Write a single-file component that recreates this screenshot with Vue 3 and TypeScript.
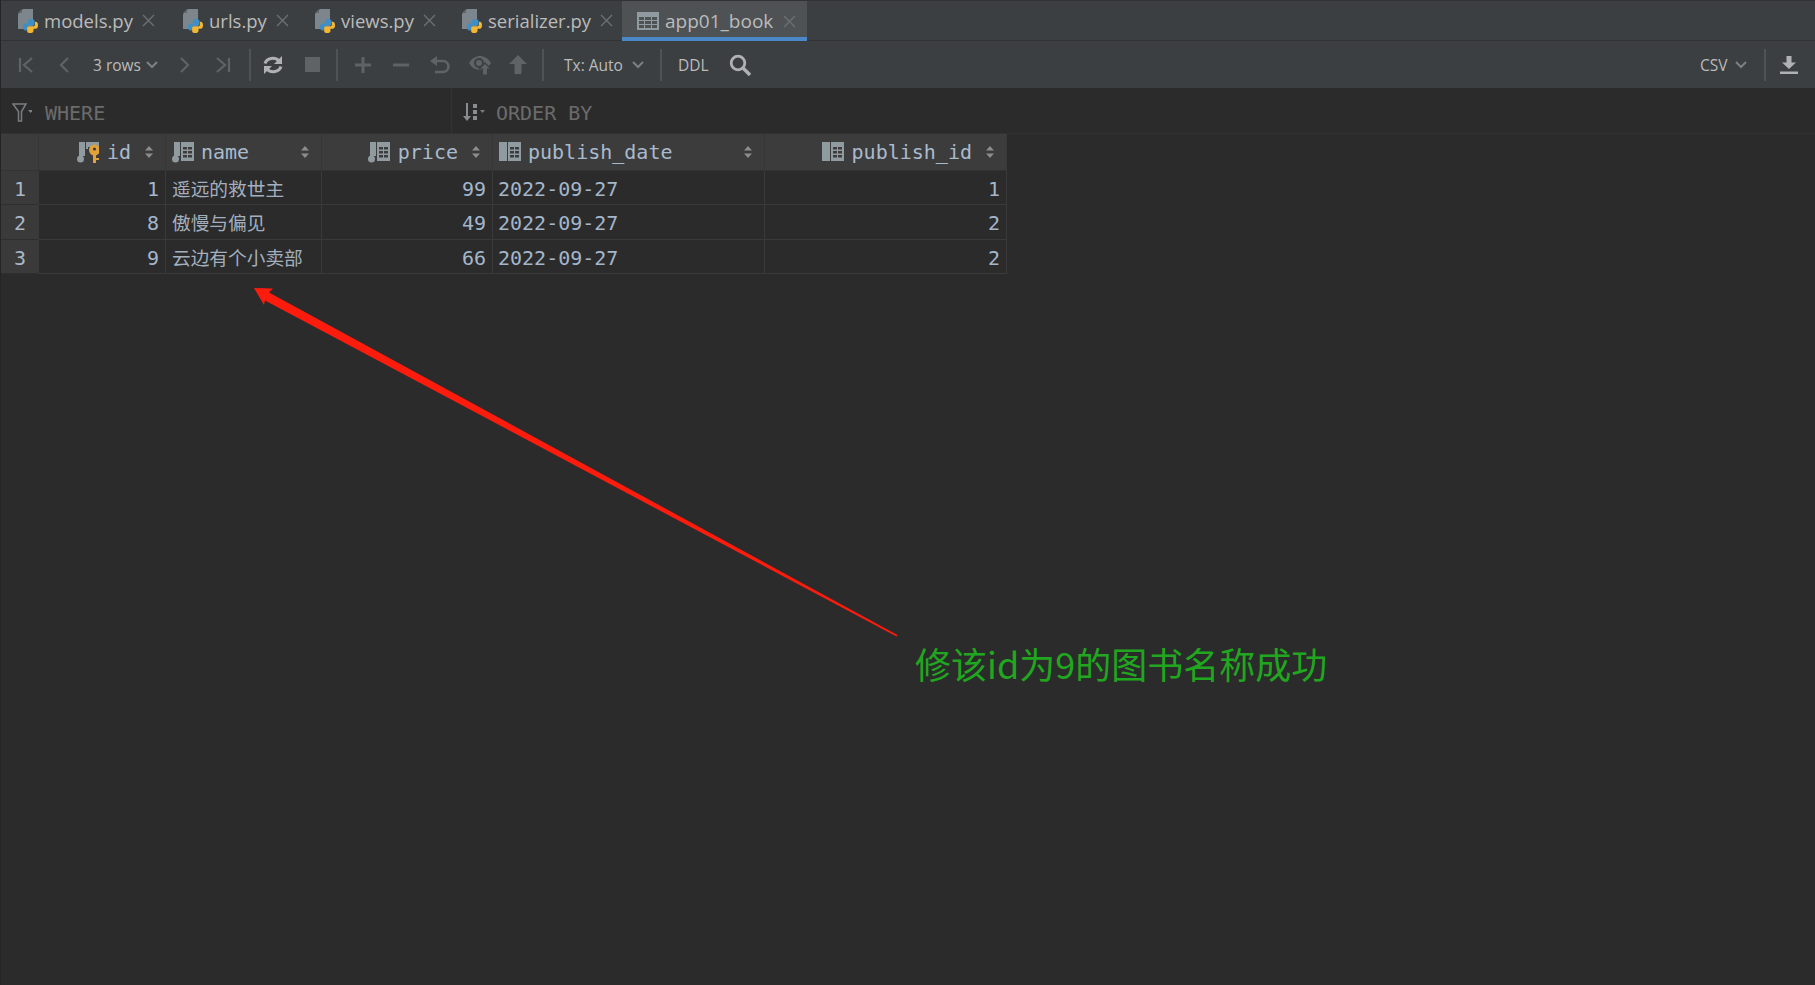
<script setup lang="ts">
interface Tab { label: string; kind: 'py' | 'table'; width: number; active?: boolean }
const tabs: Tab[] = [
  { label: 'models.py', kind: 'py', width: 165 },
  { label: 'urls.py', kind: 'py', width: 132 },
  { label: 'views.py', kind: 'py', width: 147 },
  { label: 'serializer.py', kind: 'py', width: 178 },
  { label: 'app01_book', kind: 'table', width: 185, active: true },
]
interface Col { name: string; right: boolean; icon: 'key' | 'req' | 'null' }
const cols: Col[] = [
  { name: 'id', right: true, icon: 'key' },
  { name: 'name', right: false, icon: 'req' },
  { name: 'price', right: true, icon: 'req' },
  { name: 'publish_date', right: false, icon: 'null' },
  { name: 'publish_id', right: true, icon: 'null' },
]
const rows: (string | number)[][] = [
  [1, '遥远的救世主', 99, '2022-09-27', 1],
  [8, '傲慢与偏见', 49, '2022-09-27', 2],
  [9, '云边有个小卖部', 66, '2022-09-27', 2],
]
</script>

<template>
  <div class="app">
    <div class="tabbar">
      <div v-for="t in tabs" :key="t.label" class="tab" :class="{ active: t.active }" :style="{ width: t.width + 'px' }">
        <svg v-if="t.kind === 'py'" class="tab-icon" width="20" height="24" viewBox="0 0 20 24">
          <path d="M5 0h10v20H0V5z" fill="#7c868c" />
          <path d="M4 0v4H0z" fill="#5f686d" />
          <g transform="translate(5 10) scale(.75 .88)">
            <path d="M11 0C8 0 6.500 1 6.500 3v2H3.500C1.500 5 0 6.500 0 9s1.500 4 3 4h2v-3c0-1.500 1-2.500 3-2.500h5c1.500 0 2.500-1 2.500-2.500V3C15.500 1 14 0 11 0z" fill="#3d8fc6" />
            <path d="M9.500 16c3 0 4.500-1 4.500-3v-2h3c2 0 3-1.500 3-4s-1-4-3-4h-1v3c0 1.500-1 2.500-3 2.500H8C6.500 8.500 5.500 9.500 5.500 11v2c0 2 1 3 4 3z" fill="#f2b632" />
          </g>
        </svg>
        <svg v-else class="tab-icon" width="22" height="18" viewBox="0 0 22 18">
          <path d="M0 0h22v18H0z" fill="#8f9aa1" />
          <path d="M2 5h5v3H2zM8 5h6v3H8zM15 5h5v3h-5zM2 9h5v3H2zM8 9h6v3H8zM15 9h5v3h-5zM2 13h5v3H2zM8 13h6v3H8zM15 13h5v3h-5z" fill="#4e5254" />
        </svg>
        <span class="tab-label">{{ t.label }}</span>
        <svg class="tab-close" width="13" height="13" viewBox="0 0 13 13">
          <path d="M1 1l11 11M12 1L1 12" stroke="#6c7073" stroke-width="1.400" fill="none" />
        </svg>
      </div>
    </div>

    <div class="toolbar">
      <svg class="i i-first" width="16" height="16" viewBox="0 0 16 16"><path d="M2 1v14M14 1L6 8l8 7" class="s" /></svg>
      <svg class="i i-prev" width="12" height="16" viewBox="0 0 12 16"><path d="M10 1L3 8l7 7" class="s" /></svg>
      <span class="tb-text rows-text">3 rows</span>
      <svg class="i chev" width="12" height="8" viewBox="0 0 12 8"><path d="M1 1l5 5 5-5" class="c" /></svg>
      <svg class="i i-next" width="12" height="16" viewBox="0 0 12 16"><path d="M2 1l7 7-7 7" class="s" /></svg>
      <svg class="i i-last" width="16" height="16" viewBox="0 0 16 16"><path d="M14 1v14M2 1l8 7-8 7" class="s" /></svg>
      <span class="sep sep-1"></span>
      <svg class="i i-refresh" width="20" height="20" viewBox="0 0 20 20">
        <path d="M2 8.500A8 7 0 0 1 16 6" fill="none" stroke="#afb1b3" stroke-width="3" />
        <path d="M19 1v8h-8z" fill="#afb1b3" />
        <path d="M18 11.500A8 7 0 0 1 4 14" fill="none" stroke="#afb1b3" stroke-width="3" />
        <path d="M1 19v-8h8z" fill="#afb1b3" />
      </svg>
      <span class="i i-stop"></span>
      <span class="sep sep-2"></span>
      <svg class="i i-plus" width="16" height="16" viewBox="0 0 16 16"><path d="M8 0v16M0 8h16" stroke="#5f6366" stroke-width="3" /></svg>
      <svg class="i i-minus" width="16" height="16" viewBox="0 0 16 16"><path d="M0 8h16" stroke="#5f6366" stroke-width="3" /></svg>
      <svg class="i i-undo" width="20" height="18" viewBox="0 0 20 18">
        <path d="M5 5h8a5.500 5.500 0 0 1 0 11H5" fill="none" stroke="#5f6366" stroke-width="2.600" />
        <path d="M7 0v10L0 5z" fill="#5f6366" />
      </svg>
      <svg class="i i-eye" width="22" height="20" viewBox="0 0 22 20">
        <path d="M0 8C3 3 7 1 11 1s8 2 11 7c-3 5-7 7-11 7S3 13 0 8z" fill="#5f6366" />
        <circle cx="10" cy="8" r="5" fill="#3c3f41" />
        <circle cx="10" cy="8" r="3" fill="#5f6366" />
        <path d="M16 8l6 6h-3.500v6h-5v-6H10z" fill="#5f6366" stroke="#3c3f41" stroke-width="1.200" />
      </svg>
      <svg class="i i-up" width="18" height="19" viewBox="0 0 18 19"><path d="M9 0l9 9h-5.500v10h-7V9H0z" fill="#5f6366" /></svg>
      <span class="sep sep-3"></span>
      <span class="tb-text tx-text">Tx: Auto</span>
      <svg class="i chev" width="12" height="8" viewBox="0 0 12 8"><path d="M1 1l5 5 5-5" class="c" /></svg>
      <span class="sep sep-4"></span>
      <span class="tb-text ddl-text">DDL</span>
      <svg class="i i-search" width="22" height="22" viewBox="0 0 22 22">
        <circle cx="9" cy="9" r="6.800" fill="none" stroke="#afb1b3" stroke-width="2.800" />
        <path d="M14 14l7 7" stroke="#afb1b3" stroke-width="3.400" />
      </svg>
      <span class="spacer"></span>
      <span class="tb-text csv-text">CSV</span>
      <svg class="i chev" width="12" height="8" viewBox="0 0 12 8"><path d="M1 1l5 5 5-5" class="c" /></svg>
      <span class="sep sep-5"></span>
      <svg class="i i-down" width="18" height="18" viewBox="0 0 18 18">
        <path d="M6.500 0h5v6.500H16L9 13 2 6.500h4.500z" fill="#afb1b3" />
        <path d="M0 15.500h18V18H0z" fill="#afb1b3" />
      </svg>
    </div>

    <div class="filters">
      <div class="where">
        <svg width="20" height="19" viewBox="0 0 20 19" class="f-icon">
          <path d="M1 1h13L9.500 8.500V18h-3V8.500z" fill="none" stroke="#7a7d80" stroke-width="1.500" />
          <path d="M16 7h5l-2.500 3z" fill="#7a7d80" />
        </svg>
        <span class="f-text">WHERE</span>
      </div>
      <div class="order">
        <svg width="22" height="19" viewBox="0 0 22 19" class="f-icon">
          <path d="M4 0v14" stroke="#8a8d90" stroke-width="2" />
          <path d="M0 13h8l-4 5z" fill="#8a8d90" />
          <path d="M10 1h4v4h-4zM10 7h4v4h-4zM10 13h4v4h-4z" fill="#8a8d90" />
          <path d="M17 7h5l-2.500 3z" fill="#7a7d80" />
        </svg>
        <span class="f-text">ORDER BY</span>
      </div>
    </div>

    <div class="grid">
      <div class="corner"></div>
      <div v-for="c in cols" :key="c.name" class="hcell">
        <div class="hmain" :class="{ right: c.right }">
          <svg class="col-icon" width="22" height="22" viewBox="0 0 22 22">
            <template v-if="c.icon === 'null'">
              <path d="M0 1h8v19H0z" fill="#8f9aa1" />
            </template>
            <template v-else>
              <path d="M2 1h6v14H2z" fill="#8f9aa1" />
              <circle cx="3.500" cy="18" r="3.500" fill="#8f9aa1" />
            </template>
            <path d="M9 1h13v19H9zM11 6h4v2.500h-4zM16 6h4v2.500h-4zM11 10h4v2.500h-4zM16 10h4v2.500h-4zM11 14h4v2.500h-4zM16 14h4v2.500h-4z" fill="#8f9aa1" fill-rule="evenodd" />
            <template v-if="c.icon === 'key'">
              <path d="M9 8h13v14H9z" fill="#3c3c3c" />
              <circle cx="17.500" cy="9" r="5.500" fill="#e2a23b" />
              <circle cx="17.500" cy="8" r="1.600" fill="#3c3c3c" />
              <path d="M16 12h3v10h-3zM19 17h3v2h-3z" fill="#e2a23b" />
            </template>
          </svg>
          <span class="hname">{{ c.name }}</span>
        </div>
        <svg class="sort" width="8" height="12" viewBox="0 0 8 12"><path d="M4 0l4 4.500H0zM4 12L0 7.500h8z" fill="#8a8d90" /></svg>
      </div>
      <template v-for="(r, ri) in rows" :key="ri">
        <div class="gut">{{ ri + 1 }}</div>
        <div v-for="(v, ci) in r" :key="ci" class="cell" :class="{ right: cols[ci].right, cjk: ci === 1 }">{{ v }}</div>
      </template>
    </div>

    <svg class="arrow" width="1815" height="985" viewBox="0 0 1815 985">
      <path d="M254 288L273 288.500L269 292.500L897.500 635L896.500 636.500L265 300.500L264 305z" fill="#fb1c0e" />
    </svg>
    <div class="note">修该id为9的图书名称成功</div>
  </div>
</template>

<style scoped>
.app {
  position: relative;
  width: 1815px;
  height: 985px;
  overflow: hidden;
  background: #2b2b2b;
  font-family: "Open Sans", "Noto Sans", sans-serif;
  border-left: 1px solid #252525;
  box-sizing: border-box;
}
.tabbar {
  display: flex;
  height: 41px;
  box-sizing: border-box;
  background: #3c3f41;
  border-top: 1px solid #323232;
  border-bottom: 1px solid #323232;
  margin-left: -1px;
}
.tab {
  display: flex;
  align-items: center;
  padding-left: 18px;
  box-sizing: border-box;
  height: 39px;
  flex: none;
}
.tab.active {
  background: #4e5254;
  border-bottom: 4px solid #4a88c7;
  padding-left: 15px;
  padding-top: 4px;
  margin-bottom: -1px;
  height: 40px;
}
.tab-icon { flex: none; }
.tab-label {
  margin-left: 6px;
  font-size: 18.500px;
  color: #bbbbbb;
  white-space: nowrap;
}
.active .tab-label { font-size: 19px; }
.tab-close { margin-left: 9px; flex: none; }
.active .tab-close { margin-left: 10px; }

.toolbar {
  display: flex;
  align-items: center;
  height: 47px;
  background: #3c3f41;
  padding-left: 17px;
  padding-right: 17px;
}
.i { flex: none; display: block; }
.s { fill: none; stroke: #5f6366; stroke-width: 2.200; }
.c { fill: none; stroke: #7b8084; stroke-width: 2; }
.tb-text { color: #bbbbbb; font-size: 15.500px; white-space: nowrap; }
.i-prev { margin-left: 24px; }
.rows-text { margin-left: 23px; width: 47px; }
.rows-text + .chev { margin-left: 6px; }
.i-next { margin-left: 20.500px; }
.i-last { margin-left: 24px; }
.sep { width: 2px; height: 32px; background: #505355; flex: none; }
.sep-1 { margin-left: 18px; }
.i-refresh { margin-left: 12px; }
.i-stop { margin-left: 22px; width: 15px; height: 15px; background: #5f6366; }
.sep-2 { margin-left: 16.500px; }
.i-plus { margin-left: 17px; }
.i-minus { margin-left: 22px; }
.i-undo { margin-left: 21px; }
.i-eye { margin-left: 19px; }
.i-up { margin-left: 18px; }
.sep-3 { margin-left: 15px; }
.tx-text { margin-left: 20px; width: 62px; }
.tx-text + .chev { margin-left: 6px; }
.sep-4 { margin-left: 16px; }
.ddl-text { margin-left: 16px; width: 30px; }
.i-search { margin-left: 21px; }
.spacer { flex: 1; }
.csv-text { width: 30px; }
.csv-text + .chev { margin-left: 5px; }
.sep-5 { margin-left: 17px; }
.i-down { margin-left: 14px; }

.filters {
  display: flex;
  height: 46px;
  box-sizing: border-box;
  border-bottom: 1px solid #323232;
}
.where {
  display: flex;
  align-items: center;
  width: 451px;
  padding-left: 11px;
  box-sizing: border-box;
  border-right: 1px solid #333333;
}
.order {
  display: flex;
  align-items: center;
  padding-left: 11px;
}
.f-icon { flex: none; margin-top: 4px; }
.where .f-text { margin-left: 13px; }
.order .f-text { margin-left: 11px; }
.f-text {
  font-family: "DejaVu Sans Mono", monospace;
  font-size: 20px;
  color: #6b6b6b;
  white-space: nowrap;
  padding-top: 4px;
}

.grid {
  display: grid;
  width: 1007px;
  margin-left: -1px;
  grid-template-columns: 38px 127px 156px 171px 272px 243px;
  grid-template-rows: 37px 34px 35px 34px;
  font-family: "DejaVu Sans Mono", monospace;
  font-size: 20px;
  color: #a3b6cb;
}
.corner {
  background: #3c3c3c;
  border-bottom: 1px solid #333333;
}
.hcell {
  display: flex;
  align-items: center;
  background: #3c3c3c;
  box-sizing: border-box;
  border-left: 1px solid #363636;
  border-bottom: 1px solid #333333;
  padding: 0 12px 0 6px;
}
.hmain {
  flex: 1;
  display: flex;
  align-items: center;
  gap: 7px;
  min-width: 0;
}
.hmain.right { justify-content: flex-end; gap: 8px; }
.col-icon { flex: none; }
.hname { white-space: nowrap; color: #a9bacd; }
.sort { flex: none; margin-left: 14px; }
.gut {
  background: #3a3a3a;
  color: #a9b7c6;
  text-align: center;
  box-sizing: border-box;
  padding-top: 3px;
  padding-left: 2px;
  line-height: 30px;
  border-bottom: 1px solid #2f2f2f;
}
.cell {
  box-sizing: border-box;
  border-left: 1px solid #3a3a3a;
  border-bottom: 1px solid #3a3a3a;
  padding: 3px 6px 0 5px;
  line-height: 30px;
  white-space: nowrap;
}
.cell.right { text-align: right; }
.cell.cjk {
  font-family: "Noto Sans CJK SC", sans-serif;
  font-size: 18.700px;
  color: #a3afbd;
  padding-top: 2px;
  padding-left: 6px;
}
.grid > :nth-child(6n) { border-right: 1px solid #3a3a3a; }

.arrow {
  position: absolute;
  left: -1px;
  top: 0;
  pointer-events: none;
}
.note {
  position: absolute;
  left: 914px;
  top: 637px;
  font-family: "Noto Sans CJK SC", sans-serif;
  font-size: 36px;
  line-height: 52px;
  color: #20a61f;
  white-space: nowrap;
}
</style>

<style>
html, body { margin: 0; background: #2b2b2b; }
</style>
